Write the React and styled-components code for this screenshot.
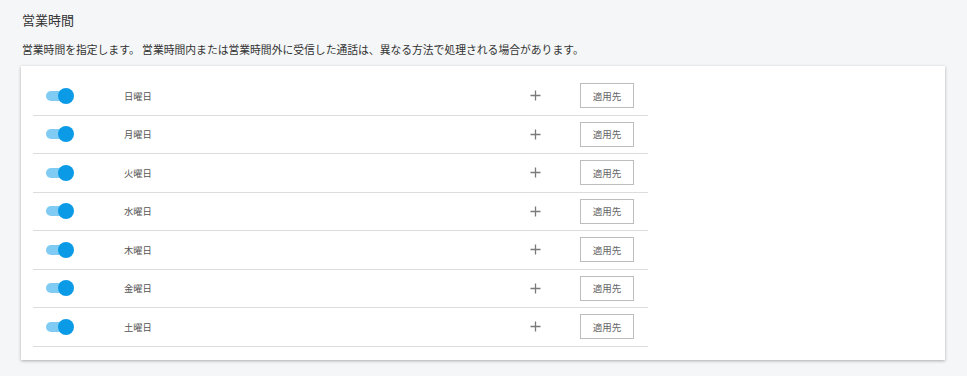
import React, { useState } from 'react';
import styled, { createGlobalStyle } from 'styled-components';

const GlobalStyle = createGlobalStyle`
    html, body {
        margin: 0;
        padding: 0;
        background: #f5f6f7;
        font-family: "Noto Sans CJK JP", "Noto Sans", sans-serif;
    }
`;

const days = ['日曜日', '月曜日', '火曜日', '水曜日', '木曜日', '金曜日', '土曜日'];

function Toggle({ on, onChange }) {
    return (
        <ToggleStyled $on={on} onClick={onChange}>
            <span className="track" />
            <span className="thumb" />
        </ToggleStyled>
    );
}

function PlusIcon() {
    return (
        <svg width="11" height="11" viewBox="0 0 11 11">
            <path d="M5.5 0.5v10M0.5 5.5h10" stroke="#7a7a7a" strokeWidth="1.3" fill="none" />
        </svg>
    );
}

function App() {
    const [enabled, setEnabled] = useState(days.map(() => true));
    const flip = (i) => setEnabled(enabled.map((v, j) => (j === i ? !v : v)));

    return (
        <Page>
            <GlobalStyle />
            <Title>営業時間</Title>
            <Description>
                営業時間を指定します。 営業時間内または営業時間外に受信した通話は、異なる方法で処理される場合があります。
            </Description>
            <Card>
                <DayList>
                    {days.map((day, i) => (
                        <DayRow key={day}>
                            <ToggleCell>
                                <Toggle on={enabled[i]} onChange={() => flip(i)} />
                            </ToggleCell>
                            <DayLabel>{day}</DayLabel>
                            <AddButton aria-label="add">
                                <PlusIcon />
                            </AddButton>
                            <ApplyButton>適用先</ApplyButton>
                        </DayRow>
                    ))}
                </DayList>
            </Card>
        </Page>
    );
}

const Page = styled.div`
    padding: 11px 22px 17px 21px;
    width: 924px;
`;

const Title = styled.h2`
    margin: 0 0 0 1px;
    font-size: 13px;
    font-weight: 400;
    color: #333;
    line-height: 18px;
`;

const Description = styled.p`
    margin: 13px 0 0 1px;
    font-size: 10.8px;
    color: #333;
    line-height: 14px;
`;

const Card = styled.section`
    margin-top: 10px;
    background: #fff;
    padding: 11px 12px 13px 12px;
    box-shadow: 0 1px 3px rgba(0, 0, 0, 0.3);
`;

const DayList = styled.div`
    width: 615px;
`;

const DayRow = styled.div`
    display: flex;
    align-items: center;
    height: 37.5px;
    border-bottom: 1px solid #dcdcdc;
`;

const ToggleCell = styled.div`
    width: 91px;
    padding-left: 13px;
    box-sizing: border-box;
`;

const ToggleStyled = styled.div`
    position: relative;
    width: 29px;
    height: 16px;
    cursor: pointer;

    .track {
        position: absolute;
        left: 0;
        top: 3px;
        width: 27px;
        height: 10px;
        border-radius: 5px;
        background: ${({ $on }) => ($on ? '#7fcbf3' : '#c4c4c4')};
    }

    .thumb {
        position: absolute;
        top: 0;
        left: ${({ $on }) => ($on ? '12px' : '0')};
        width: 16px;
        height: 16px;
        border-radius: 50%;
        background: ${({ $on }) => ($on ? '#0b9ae6' : '#f1f1f1')};
    }
`;

const DayLabel = styled.span`
    flex: 1;
    font-size: 9.3px;
    color: #555;
`;

const AddButton = styled.button`
    display: flex;
    align-items: center;
    justify-content: center;
    width: 14px;
    height: 14px;
    padding: 0;
    margin-right: 38px;
    border: none;
    background: none;
    cursor: pointer;
`;

const ApplyButton = styled.button`
    width: 54px;
    height: 25px;
    margin-right: 14px;
    padding: 0;
    border: 1px solid #bdbdbd;
    background: #fff;
    color: #666;
    font-family: inherit;
    font-size: 9.5px;
    cursor: pointer;
`;

export default App;
